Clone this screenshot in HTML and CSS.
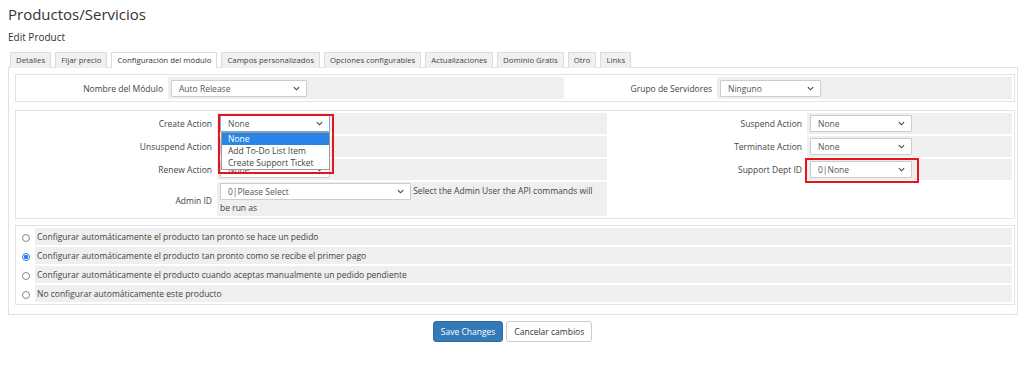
FILE: index.html
```html
<!DOCTYPE html>
<html lang="es">
<head>
<meta charset="utf-8">
<title>Productos/Servicios</title>
<link rel="stylesheet" href="styles.css">
</head>
<body>
<h1 class="title">Productos/Servicios</h1>
<h2 class="subtitle">Edit Product</h2>

<ul class="tabs">
  <li class="tab">Detalles</li>
  <li class="tab">Fijar precio</li>
  <li class="tab active">Configuración del módulo</li>
  <li class="tab">Campos personalizados</li>
  <li class="tab">Opciones configurables</li>
  <li class="tab">Actualizaciones</li>
  <li class="tab">Dominio Gratis</li>
  <li class="tab">Otro</li>
  <li class="tab">Links</li>
</ul>

<div class="panel">
  <table class="form t1">
    <colgroup><col class="c1a"><col class="c1b"><col class="c1c"><col class="c1d"></colgroup>
    <tr>
      <td class="label">Nombre del Módulo</td>
      <td class="field"><div class="sel w135">Auto Release<svg class="chev" viewBox="0 0 8 5"><path d="M1 1l3 3 3-3" fill="none" stroke="#444" stroke-width="1.3"/></svg></div></td>
      <td class="label">Grupo de Servidores</td>
      <td class="field"><div class="sel w100">Ninguno<svg class="chev" viewBox="0 0 8 5"><path d="M1 1l3 3 3-3" fill="none" stroke="#444" stroke-width="1.3"/></svg></div></td>
    </tr>
  </table>

  <table class="form t2">
    <colgroup><col class="c2a"><col class="c2b"><col class="c2c"><col class="c2d"></colgroup>
    <tr>
      <td class="label">Create Action</td>
      <td class="field rel">
        <div class="sel w109 open">None<svg class="chev" viewBox="0 0 8 5"><path d="M1 1l3 3 3-3" fill="none" stroke="#444" stroke-width="1.3"/></svg></div>
        <ul class="dropdown">
          <li class="opt hl">None</li>
          <li class="opt">Add To-Do List Item</li>
          <li class="opt">Create Support Ticket</li>
        </ul>
        <div class="redbox rb1"></div>
      </td>
      <td class="label">Suspend Action</td>
      <td class="field"><div class="sel w101">None<svg class="chev" viewBox="0 0 8 5"><path d="M1 1l3 3 3-3" fill="none" stroke="#444" stroke-width="1.3"/></svg></div></td>
    </tr>
    <tr>
      <td class="label">Unsuspend Action</td>
      <td class="field"><div class="sel w109 hidden">None<svg class="chev" viewBox="0 0 8 5"><path d="M1 1l3 3 3-3" fill="none" stroke="#444" stroke-width="1.3"/></svg></div></td>
      <td class="label">Terminate Action</td>
      <td class="field"><div class="sel w101">None<svg class="chev" viewBox="0 0 8 5"><path d="M1 1l3 3 3-3" fill="none" stroke="#444" stroke-width="1.3"/></svg></div></td>
    </tr>
    <tr>
      <td class="label">Renew Action</td>
      <td class="field"><div class="sel w109 under"><span class="undertext">None</span><svg class="chev" viewBox="0 0 8 5"><path d="M1 1l3 3 3-3" fill="none" stroke="#444" stroke-width="1.3"/></svg></div></td>
      <td class="label">Support Dept ID</td>
      <td class="field rel"><div class="sel w101">0|None<svg class="chev" viewBox="0 0 8 5"><path d="M1 1l3 3 3-3" fill="none" stroke="#444" stroke-width="1.3"/></svg></div><div class="redbox rb2"></div></td>
    </tr>
    <tr>
      <td class="label tall">Admin ID</td>
      <td class="field tall"><div class="admin"><div class="sel w190 inl">0|Please Select<svg class="chev" viewBox="0 0 8 5"><path d="M1 1l3 3 3-3" fill="none" stroke="#444" stroke-width="1.3"/></svg></div> Select the Admin User the API commands will<br>be run as</div></td>
      <td class="label blank"></td>
      <td class="field blank"></td>
    </tr>
  </table>

  <table class="form t3">
    <colgroup><col class="c3a"><col class="c3b"></colgroup>
    <tr><td class="rad"><span class="radio"></span></td><td class="rtext">Configurar automáticamente el producto tan pronto se hace un pedido</td></tr>
    <tr><td class="rad"><span class="radio on"></span></td><td class="rtext">Configurar automáticamente el producto tan pronto como se recibe el primer pago</td></tr>
    <tr><td class="rad"><span class="radio"></span></td><td class="rtext">Configurar automáticamente el producto cuando aceptas manualmente un pedido pendiente</td></tr>
    <tr><td class="rad"><span class="radio"></span></td><td class="rtext">No configurar automáticamente este producto</td></tr>
  </table>
</div>

<div class="actions">
  <button class="btn primary">Save Changes</button>
  <button class="btn">Cancelar cambios</button>
</div>
</body>
</html>
```

FILE: styles.css
```css
* { box-sizing: border-box; }
html, body { margin: 0; background: #fff; }
body {
  padding: 0 6px 0 8px;
  font-family: "Open Sans", "Liberation Sans", sans-serif;
  color: #333;
  font-size: 8.5px;
}
.title {
  margin: 5px 0 0;
  font-size: 15px;
  font-weight: 400;
  line-height: 18px;
  color: #333;
}
.subtitle {
  margin: 7px 0 0;
  font-size: 10px;
  font-weight: 400;
  line-height: 14px;
  color: #333;
}
.tabs {
  list-style: none;
  margin: 8px 0 0;
  padding: 0 0 0 2px;
  display: flex;
  gap: 4px;
  height: 15px;
  position: relative;
  z-index: 2;
}
.tab {
  height: 16px;
  padding: 0 5px;
  line-height: 15px;
  font-size: 7.8px;
  color: #444;
  background: #f0f0f0;
  border: 1px solid #dcdcdc;
  border-bottom: none;
}
.tab.active {
  background: #fff;
  color: #333;
}
.panel {
  border: 1px solid #e2e2e2;
  padding: 6px 2px 9px 6px;
}
table.form {
  width: 1000px;
  table-layout: fixed;
  border-collapse: separate;
  border-spacing: 2px;
  border: 1px solid #dde4ea;
}
.t2 { margin-top: 8px; }
.t3 { margin-top: 6px; border-spacing: 0 1px; }
.c1a { width: 148px; } .c1b { width: 396px; } .c1c { width: 149px; } .c1d { width: 295px; }
.c2a { width: 197px; } .c2b { width: 390px; } .c2c { width: 196px; } .c2d { width: 205px; }
.c3a { width: 15px; }
td { padding: 0; vertical-align: middle; }
.label {
  text-align: right;
  padding-right: 3px;
  background: #fff;
  color: #444;
}
.field {
  background: #efefef;
  padding-left: 3px;
}
.t1 td { height: 22px; }
.t2 td { height: 21px; }
.t2 td.tall { height: 34px; }
.t2 td.label.tall { padding-top: 2px; }
.t2 td.blank { background: #fff; }
.t2 td.field.blank { background: #fff; }
.rel { position: relative; }
.sel {
  display: flex;
  align-items: center;
  justify-content: space-between;
  height: 17px;
  padding: 0 6px 0 7px;
  background: #fff;
  border: 1px solid #ccc;
  border-radius: 1px;
  color: #555;
  font-size: 8.5px;
}
.sel.inl { display: inline-flex; vertical-align: middle; }
.sel.open { border-color: #7aa7d6; }
.chev { width: 7px; height: 5px; }
.w135 { width: 136px; }
.w100 { width: 101px; }
.w109 { width: 110px; }
.w101 { width: 102px; }
.w190 { width: 191px; }
.admin {
  line-height: 16px;
  color: #444;
  padding-top: 1px;
}
.dropdown {
  position: absolute;
  left: 4px;
  top: 19px;
  width: 109px;
  margin: 0;
  padding: 0;
  list-style: none;
  background: #fff;
  border: 1px solid #9a9a9a;
  z-index: 3;
}
.opt {
  height: 12px;
  line-height: 12px;
  padding-left: 6px;
  color: #444;
  font-size: 8.5px;
}
.opt.hl { background: #2a86e6; color: #fff; }
.redbox {
  position: absolute;
  border: 2px solid #e8141c;
  z-index: 4;
  pointer-events: none;
}
.rb1 { left: 1px; top: 1px; width: 116px; height: 60px; }
.rb2 { left: -2px; top: -1px; width: 114px; height: 25px; }
.t3 td { height: 17px; }
.rad { background: #fff; text-align: center; }
.rtext { background: #efefef; padding-left: 2px; color: #444; }
.radio {
  display: inline-block;
  width: 8px;
  height: 8px;
  border: 1px solid #888;
  border-radius: 50%;
  background: #fff;
  vertical-align: middle;
}
.radio.on {
  border-color: #2a7ee8;
  background: radial-gradient(circle, #2a7ee8 0 2px, #fff 2.4px);
}
.actions {
  display: flex;
  justify-content: center;
  gap: 3px;
  margin-top: 6px;
  padding-right: 1px;
}
.btn {
  height: 21px;
  padding: 0 7px;
  font-family: "Open Sans", "Liberation Sans", sans-serif;
  font-size: 8.5px;
  border: 1px solid #ccc;
  border-radius: 3px;
  background: #fff;
  color: #333;
}
.btn.primary {
  background: #337ab7;
  border-color: #2e6da4;
  color: #fff;
}
```
